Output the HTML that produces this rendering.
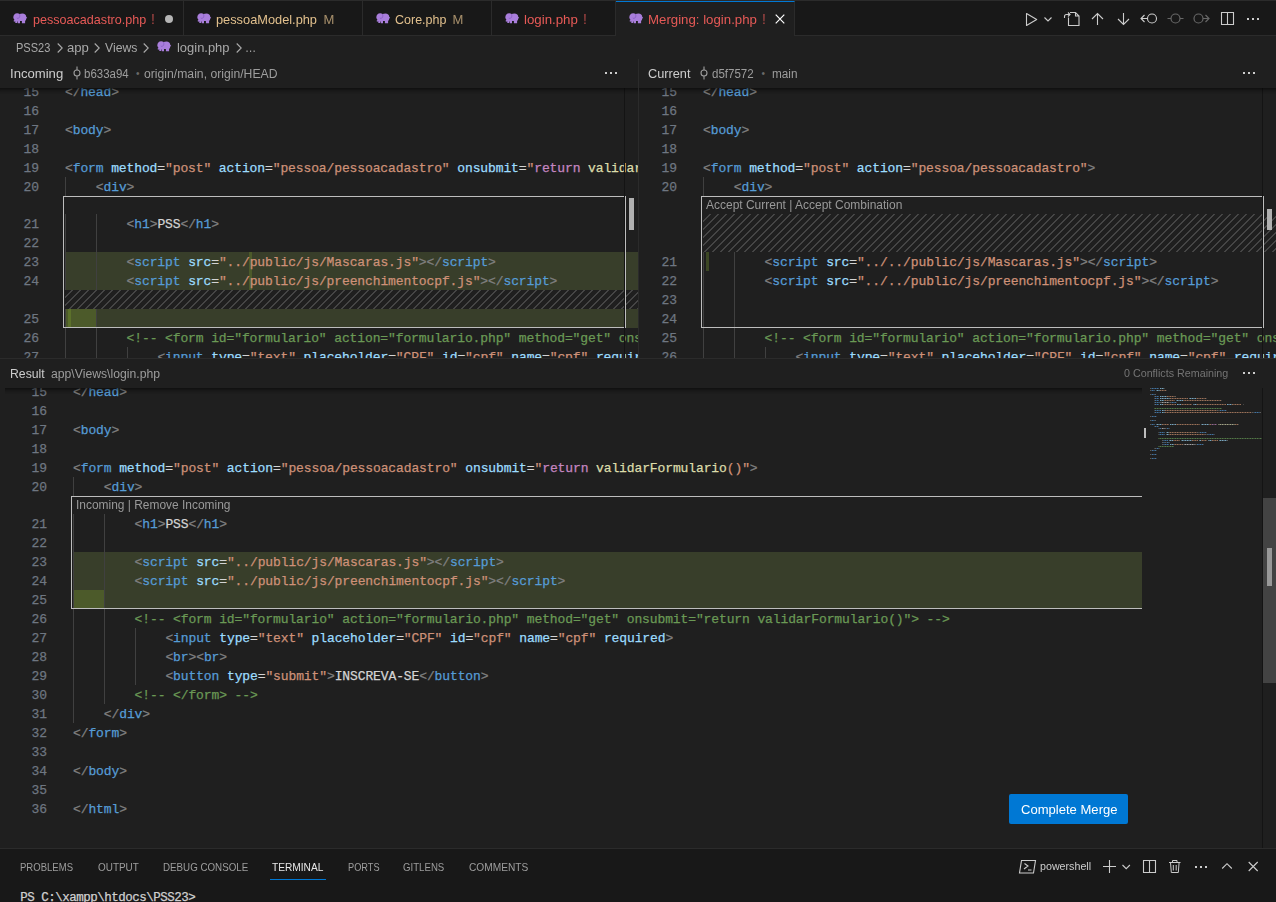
<!DOCTYPE html>
<html lang="pt-BR"><head><meta charset="utf-8"><title>Merging: login.php - PSS23 - Visual Studio Code</title>
<style>
*{box-sizing:border-box;margin:0;padding:0}
html,body{width:1276px;height:902px;overflow:hidden;background:#1f1f1f}
body{position:relative;font-family:"Liberation Sans",sans-serif;font-size:13px;color:#ccc}
.abs{position:absolute}
.ui{position:absolute;white-space:pre;line-height:20px;height:20px;transform-origin:0 0}
.pane{position:absolute;overflow:hidden;background:#1f1f1f}
.ln{position:absolute;left:0;text-align:right;color:#6e7681;font-family:"Liberation Mono",monospace;font-size:13px;letter-spacing:-0.112px;line-height:19px;height:19px;white-space:pre;-webkit-text-stroke:0.25px}
.cl{position:absolute;font-family:"Liberation Mono",monospace;font-size:13px;letter-spacing:-0.112px;line-height:19px;height:19px;white-space:pre;color:#ccc;-webkit-text-stroke:0.25px}
.p{color:#808080}.t{color:#569cd6}.a{color:#9cdcfe}.s{color:#ce9178}.x{color:#d4d4d4}.c{color:#6a9955}.k{color:#c586c0}.f{color:#dcdcaa}
.guide{position:absolute;width:1px;background:#404040}
.box{position:absolute;border:1px solid #bdbdbd}
.chg{position:absolute;background:#383e2a}
.wchg{position:absolute;background:#4c5a2a}
.wbar{position:absolute;width:3px;background:#4c5a2a}
.hatch{position:absolute;background-image:linear-gradient(-45deg,#454545 12.5%,transparent 12.5%,transparent 50%,#454545 50%,#454545 62.5%,transparent 62.5%,transparent 100%);background-size:8px 8px}
.shadow{position:absolute;height:6px;box-shadow:#000 0 6px 6px -6px inset}
svg.ic{position:absolute;overflow:visible}
.mm{position:absolute;left:1150px;top:0;width:112px;height:80px;-webkit-mask-image:repeating-linear-gradient(90deg,#000 0,#000 1.3px,rgba(0,0,0,.45) 1.3px,rgba(0,0,0,.45) 2px,#000 2px,#000 3.4px,rgba(0,0,0,.6) 3.4px,rgba(0,0,0,.6) 5px);mask-image:repeating-linear-gradient(90deg,#000 0,#000 1.3px,rgba(0,0,0,.45) 1.3px,rgba(0,0,0,.45) 2px,#000 2px,#000 3.4px,rgba(0,0,0,.6) 3.4px,rgba(0,0,0,.6) 5px)}
.mm i{position:absolute;height:1px}
</style></head><body>

<div class="abs" style="left:0;top:0;width:1276px;height:36px;background:#181818;border-top:1px solid #2b2b2b;border-bottom:1px solid #2b2b2b"></div>
<div class="abs" style="left:183px;top:1px;width:1px;height:35px;background:#2b2b2b"></div>
<div class="abs" style="left:362px;top:1px;width:1px;height:35px;background:#2b2b2b"></div>
<div class="abs" style="left:491px;top:1px;width:1px;height:35px;background:#2b2b2b"></div>
<div class="abs" style="left:615px;top:1px;width:1px;height:35px;background:#2b2b2b"></div>
<div class="abs" style="left:616px;top:1px;width:179px;height:35px;background:#1f1f1f;border-top:1px solid #0078d4;border-right:1px solid #2b2b2b"></div>
<svg class="ic" style="left:13px;top:12.6px" width="14.500" height="10.500" viewBox="0 0 14.500 10.500"><path fill="#a97edb" d="M0.300 4.500C0.300 2 1.800 0.200 4.200 0.200c1 0 1.800 0.300 2.400 0.800C7.400 0.600 8.400 0.400 9.400 0.400c2.400 0 3.800 1.500 3.900 3.500l0.900 0.900-0.900 0.600c-0.100 1.100-0.600 1.900-1.200 2.500V10.300H8.900V8H7V10.300H4.800V8.600H4.200V10H2.300V8.200C1.800 8.600 1.200 8.800 0.800 8.600L0.600 7.600C1.100 7.600 1.400 7.200 1.300 6.600 0.700 6 0.300 5.300 0.300 4.500z"/><path fill="none" stroke="#7f55bd" stroke-width="0.700" d="M6.500 1.100c0.700 1.400 0.300 3.300-0.900 4.100-0.600 0.300-1.300 0.200-1.800-0.200"/></svg>
<span class="ui" id="tab1" style="left:32.60px;top:9.6px;font-size:13px;color:#e75a57;transform:scaleX(0.9676);">pessoacadastro.php</span>
<span class="ui" id="tab1b" style="left:151.00px;top:9.1px;font-size:14px;color:#e75a57;transform:scaleX(1.0000);opacity:.7">!</span>
<div class="abs" style="left:164.500px;top:14.500px;width:8.500px;height:8.500px;border-radius:50%;background:#b5b5b5"></div>
<svg class="ic" style="left:196.8px;top:12.6px" width="14.500" height="10.500" viewBox="0 0 14.500 10.500"><path fill="#a97edb" d="M0.300 4.500C0.300 2 1.800 0.200 4.200 0.200c1 0 1.800 0.300 2.400 0.800C7.400 0.600 8.400 0.400 9.400 0.400c2.400 0 3.800 1.500 3.900 3.500l0.900 0.900-0.900 0.600c-0.100 1.100-0.600 1.900-1.200 2.500V10.300H8.900V8H7V10.300H4.800V8.600H4.200V10H2.300V8.200C1.800 8.600 1.200 8.800 0.800 8.600L0.600 7.600C1.100 7.600 1.400 7.200 1.300 6.600 0.700 6 0.300 5.300 0.300 4.500z"/><path fill="none" stroke="#7f55bd" stroke-width="0.700" d="M6.500 1.100c0.700 1.400 0.300 3.300-0.900 4.100-0.600 0.300-1.300 0.200-1.800-0.200"/></svg>
<span class="ui" id="tab2" style="left:216.40px;top:9.6px;font-size:13px;color:#e2c08d;transform:scaleX(0.9840);">pessoaModel.php</span>
<span class="ui" id="tab2b" style="left:323.40px;top:9.6px;font-size:13px;color:#e2c08d;transform:scaleX(1.0000);opacity:.7">M</span>
<svg class="ic" style="left:375.8px;top:12.6px" width="14.500" height="10.500" viewBox="0 0 14.500 10.500"><path fill="#a97edb" d="M0.300 4.500C0.300 2 1.800 0.200 4.200 0.200c1 0 1.800 0.300 2.400 0.800C7.400 0.600 8.400 0.400 9.400 0.400c2.400 0 3.800 1.500 3.900 3.500l0.900 0.900-0.900 0.600c-0.100 1.100-0.600 1.900-1.200 2.500V10.300H8.900V8H7V10.300H4.800V8.600H4.200V10H2.300V8.200C1.800 8.600 1.200 8.800 0.800 8.600L0.600 7.600C1.100 7.600 1.400 7.200 1.300 6.600 0.700 6 0.300 5.300 0.300 4.500z"/><path fill="none" stroke="#7f55bd" stroke-width="0.700" d="M6.500 1.100c0.700 1.400 0.300 3.300-0.900 4.100-0.600 0.300-1.300 0.200-1.800-0.200"/></svg>
<span class="ui" id="tab3" style="left:394.80px;top:9.6px;font-size:13px;color:#e2c08d;transform:scaleX(0.9610);">Core.php</span>
<span class="ui" id="tab3b" style="left:452.50px;top:9.6px;font-size:13px;color:#e2c08d;transform:scaleX(1.0000);opacity:.7">M</span>
<svg class="ic" style="left:504.8px;top:12.6px" width="14.500" height="10.500" viewBox="0 0 14.500 10.500"><path fill="#a97edb" d="M0.300 4.500C0.300 2 1.800 0.200 4.200 0.200c1 0 1.800 0.300 2.400 0.800C7.400 0.600 8.400 0.400 9.400 0.400c2.400 0 3.800 1.500 3.900 3.500l0.900 0.900-0.900 0.600c-0.100 1.100-0.600 1.900-1.200 2.500V10.300H8.900V8H7V10.300H4.800V8.600H4.200V10H2.300V8.200C1.800 8.600 1.200 8.800 0.800 8.600L0.600 7.600C1.100 7.600 1.400 7.200 1.300 6.600 0.700 6 0.300 5.300 0.300 4.500z"/><path fill="none" stroke="#7f55bd" stroke-width="0.700" d="M6.500 1.100c0.700 1.400 0.300 3.300-0.900 4.100-0.600 0.300-1.300 0.200-1.800-0.200"/></svg>
<span class="ui" id="tab4" style="left:524.10px;top:9.6px;font-size:13px;color:#e75a57;transform:scaleX(1.0212);">login.php</span>
<span class="ui" id="tab4b" style="left:583.00px;top:9.1px;font-size:14px;color:#e75a57;transform:scaleX(1.0000);opacity:.7">!</span>
<svg class="ic" style="left:628.8px;top:12.6px" width="14.500" height="10.500" viewBox="0 0 14.500 10.500"><path fill="#a97edb" d="M0.300 4.500C0.300 2 1.800 0.200 4.200 0.200c1 0 1.800 0.300 2.400 0.800C7.400 0.600 8.400 0.400 9.400 0.400c2.400 0 3.800 1.500 3.900 3.500l0.900 0.900-0.900 0.600c-0.100 1.100-0.600 1.900-1.200 2.500V10.300H8.900V8H7V10.300H4.800V8.600H4.200V10H2.300V8.200C1.800 8.600 1.200 8.800 0.800 8.600L0.600 7.600C1.100 7.600 1.400 7.200 1.300 6.600 0.700 6 0.300 5.300 0.300 4.500z"/><path fill="none" stroke="#7f55bd" stroke-width="0.700" d="M6.500 1.100c0.700 1.400 0.300 3.300-0.900 4.100-0.600 0.300-1.300 0.200-1.800-0.200"/></svg>
<span class="ui" id="tab5" style="left:648.30px;top:9.6px;font-size:13px;color:#e75a57;transform:scaleX(1.0181);">Merging: login.php</span>
<span class="ui" id="tab5b" style="left:762.00px;top:9.1px;font-size:14px;color:#e75a57;transform:scaleX(1.0000);opacity:.7">!</span>
<svg class="ic" style="left:775px;top:14px" width="10" height="10" viewBox="0 0 10 10"><path d="M0.700 0.700l8.600 8.600M9.300 0.700l-8.600 8.600" stroke="#fff" stroke-width="1.200" fill="none"/></svg>
<svg class="ic" style="left:1020px;top:8px" width="250" height="24" viewBox="1020 8 250 24" fill="none" stroke="#ccc" stroke-width="1.1">
<path d="M1026.500 13.500v12l10.200-6z" stroke-linejoin="round"/>
<path d="M1044.500 17.500l3.500 3.500 3.500-3.500"/>
<path d="M1068.500 17.500v8h10.500v-9.500l-3.500-3.500h-5.500M1075.500 12.500v3.500h3.500"/>
<path d="M1064.500 18v-1.500a2 2 0 0 1 2-2h3.500M1068 12.500l2 2-2 2"/>
<path d="M1097.500 25v-11.500M1092 19l5.500-5.500 5.500 5.500"/>
<path d="M1123.500 13v11.500M1118 19l5.500 5.500 5.500-5.500"/>
<circle cx="1152" cy="18.500" r="4.500"/><path d="M1147.500 18.500h-6.500M1144.500 15l-3.500 3.500 3.500 3.500"/>
<g stroke="#676767" stroke-width="1.2"><circle cx="1175.500" cy="18.500" r="4.500"/><path d="M1167.500 18.500h3.500M1180 18.500h3.500"/>
<circle cx="1198.500" cy="18.500" r="4.500"/><path d="M1203 18.500h6M1205.500 15l3.500 3.500-3.500 3.500"/></g>
<path d="M1221.500 12.500h12v12h-12zM1227.500 12.500v12"/>
<g fill="#ccc" stroke="none"><rect x="1247" y="18" width="2" height="2"/><rect x="1252" y="18" width="2" height="2"/><rect x="1257" y="18" width="2" height="2"/></g>
</svg>
<span class="ui" id="bc1" style="left:16.00px;top:37.7px;font-size:13px;color:#a9a9a9;transform:scaleX(0.8472);">PSS23</span><svg class="ic" style="left:57.2px;top:42.500px" width="6" height="10" viewBox="0 0 6 10"><path d="M0.700 0.500l4.500 4.500-4.500 4.500" stroke="#a9a9a9" stroke-width="1.100" fill="none"/></svg><span class="ui" id="bc2" style="left:67.00px;top:37.7px;font-size:13px;color:#a9a9a9;transform:scaleX(1.0091);">app</span><svg class="ic" style="left:94.2px;top:42.500px" width="6" height="10" viewBox="0 0 6 10"><path d="M0.700 0.500l4.500 4.500-4.500 4.500" stroke="#a9a9a9" stroke-width="1.100" fill="none"/></svg><span class="ui" id="bc3" style="left:105.10px;top:37.7px;font-size:13px;color:#a9a9a9;transform:scaleX(0.9404);">Views</span><svg class="ic" style="left:143.2px;top:42.500px" width="6" height="10" viewBox="0 0 6 10"><path d="M0.700 0.500l4.500 4.500-4.500 4.500" stroke="#a9a9a9" stroke-width="1.100" fill="none"/></svg><svg class="ic" style="left:157px;top:41.2px" width="14.500" height="10.500" viewBox="0 0 14.500 10.500"><path fill="#a97edb" d="M0.300 4.500C0.300 2 1.800 0.200 4.200 0.200c1 0 1.800 0.300 2.400 0.800C7.400 0.600 8.400 0.400 9.400 0.400c2.400 0 3.800 1.500 3.900 3.500l0.900 0.900-0.900 0.600c-0.100 1.100-0.600 1.900-1.200 2.500V10.300H8.900V8H7V10.300H4.800V8.600H4.200V10H2.300V8.200C1.800 8.600 1.200 8.800 0.800 8.600L0.600 7.600C1.100 7.600 1.400 7.200 1.300 6.600 0.700 6 0.300 5.300 0.300 4.500z"/><path fill="none" stroke="#7f55bd" stroke-width="0.700" d="M6.500 1.100c0.700 1.400 0.300 3.300-0.900 4.100-0.600 0.300-1.300 0.200-1.800-0.200"/></svg><span class="ui" id="bc4" style="left:176.80px;top:37.7px;font-size:13px;color:#a9a9a9;transform:scaleX(0.9947);">login.php</span><svg class="ic" style="left:236.2px;top:42.500px" width="6" height="10" viewBox="0 0 6 10"><path d="M0.700 0.500l4.500 4.500-4.500 4.500" stroke="#a9a9a9" stroke-width="1.100" fill="none"/></svg><span class="ui" style="left:245.100px;top:37.7px;font-size:13px;color:#a9a9a9;transform:scaleX(.86)">…</span>
<span class="ui" id="h1a" style="left:10.30px;top:63.9px;font-size:13px;color:#ccc;transform:scaleX(1.0085);">Incoming</span><svg class="ic" style="left:73px;top:66px" width="8" height="14" viewBox="0 0 8 14"><circle cx="4" cy="7" r="3" stroke="#9d9d9d" stroke-width="1.100" fill="none"/><path d="M4 0.500v3.500M4 10v3.500" stroke="#9d9d9d" stroke-width="1.100"/></svg><span class="ui" id="h1b" style="left:84.20px;top:63.9px;font-size:12px;color:#9d9d9d;transform:scaleX(0.9568);">b633a94</span><span class="ui" id="h1c" style="left:136.00px;top:63.9px;font-size:10px;color:#6a6a6a;transform:scaleX(1.0000);">•</span><span class="ui" id="h1d" style="left:143.90px;top:63.9px;font-size:12px;color:#9d9d9d;transform:scaleX(1.0161);">origin/main, origin/HEAD</span><svg class="ic" style="left:605px;top:72px" width="13" height="2" viewBox="0 0 13 2"><rect x="0" y="0" width="2" height="2" fill="#ccc"/><rect x="5" y="0" width="2" height="2" fill="#ccc"/><rect x="10" y="0" width="2" height="2" fill="#ccc"/></svg>
<span class="ui" id="h2a" style="left:648.00px;top:63.9px;font-size:13px;color:#ccc;transform:scaleX(0.9802);">Current</span><svg class="ic" style="left:700px;top:66px" width="8" height="14" viewBox="0 0 8 14"><circle cx="4" cy="7" r="3" stroke="#9d9d9d" stroke-width="1.100" fill="none"/><path d="M4 0.500v3.500M4 10v3.500" stroke="#9d9d9d" stroke-width="1.100"/></svg><span class="ui" id="h2b" style="left:711.70px;top:63.9px;font-size:12px;color:#9d9d9d;transform:scaleX(0.9610);">d5f7572</span><span class="ui" id="h2c" style="left:761.50px;top:63.9px;font-size:10px;color:#6a6a6a;transform:scaleX(1.0000);">•</span><span class="ui" id="h2d" style="left:771.50px;top:63.9px;font-size:12px;color:#9d9d9d;transform:scaleX(0.9802);">main</span><svg class="ic" style="left:1243px;top:72px" width="13" height="2" viewBox="0 0 13 2"><rect x="0" y="0" width="2" height="2" fill="#ccc"/><rect x="5" y="0" width="2" height="2" fill="#ccc"/><rect x="10" y="0" width="2" height="2" fill="#ccc"/></svg>
<span class="ui" id="h3a" style="left:10.30px;top:363.9px;font-size:13px;color:#ccc;transform:scaleX(0.9414);">Result</span><span class="ui" id="h3b" style="left:51.00px;top:363.9px;font-size:12px;color:#9d9d9d;transform:scaleX(1.0168);">app\Views\login.php</span><span class="ui" id="h3c" style="left:1123.80px;top:363.0px;font-size:11px;color:#747474;transform:scaleX(0.9748);">0 Conflicts Remaining</span><svg class="ic" style="left:1243px;top:372px" width="13" height="2" viewBox="0 0 13 2"><rect x="0" y="0" width="2" height="2" fill="#ccc"/><rect x="5" y="0" width="2" height="2" fill="#ccc"/><rect x="10" y="0" width="2" height="2" fill="#ccc"/></svg>
<div class="abs" style="left:638px;top:59px;width:1px;height:299px;background:#2b2b2b"></div>
<div class="abs" style="left:0;top:358px;width:1276px;height:1px;background:#2b2b2b"></div>
<div class="pane" style="left:0;top:88px;width:638px;height:270px">
<div class="chg" style="left:65px;top:164px;width:573px;height:38px"></div>
<div class="wbar" style="left:249px;top:164px;height:38px"></div>
<div class="hatch" style="left:65px;top:202px;width:573px;height:19px"></div>
<div class="chg" style="left:65px;top:221px;width:573px;height:19px"></div>
<div class="wchg" style="left:65px;top:221px;width:31px;height:19px"></div>
<div class="wbar" style="left:68px;top:221px;height:19px;background:#5c712a"></div>
<div class="guide" style="left:65px;top:89px;height:19px"></div>
<div class="guide" style="left:65px;top:126px;height:76px"></div>
<div class="guide" style="left:96px;top:126px;height:76px"></div>
<div class="guide" style="left:65px;top:221px;height:57px"></div>
<div class="guide" style="left:96px;top:221px;height:57px"></div>
<div class="guide" style="left:127px;top:259px;height:19px"></div>
<div class="ln" style="top:-5px;width:39px">15</div>
<div class="cl" style="top:-5px;left:65.0px"><span class="p">&lt;/</span><span class="t">head</span><span class="p">&gt;</span></div>
<div class="ln" style="top:14px;width:39px">16</div>
<div class="ln" style="top:33px;width:39px">17</div>
<div class="cl" style="top:33px;left:65.0px"><span class="p">&lt;</span><span class="t">body</span><span class="p">&gt;</span></div>
<div class="ln" style="top:52px;width:39px">18</div>
<div class="ln" style="top:71px;width:39px">19</div>
<div class="cl" style="top:71px;left:65.0px"><span class="p">&lt;</span><span class="t">form</span> <span class="a">method</span><span class="x">=</span><span class="s">"post"</span> <span class="a">action</span><span class="x">=</span><span class="s">"pessoa/pessoacadastro"</span> <span class="a">onsubmit</span><span class="x">=</span><span class="s">"</span><span class="k">return</span> <span class="f">validarFormulario</span><span class="s">()"</span><span class="p">&gt;</span></div>
<div class="ln" style="top:90px;width:39px">20</div>
<div class="cl" style="top:90px;left:95.8px"><span class="p">&lt;</span><span class="t">div</span><span class="p">&gt;</span></div>
<div class="ln" style="top:127px;width:39px">21</div>
<div class="cl" style="top:127px;left:126.6px"><span class="p">&lt;</span><span class="t">h1</span><span class="p">&gt;</span><span class="x">PSS</span><span class="p">&lt;/</span><span class="t">h1</span><span class="p">&gt;</span></div>
<div class="ln" style="top:146px;width:39px">22</div>
<div class="ln" style="top:165px;width:39px">23</div>
<div class="cl" style="top:165px;left:126.6px"><span class="p">&lt;</span><span class="t">script</span> <span class="a">src</span><span class="x">=</span><span class="s">"../public/js/Mascaras.js"</span><span class="p">&gt;</span><span class="p">&lt;/</span><span class="t">script</span><span class="p">&gt;</span></div>
<div class="ln" style="top:184px;width:39px">24</div>
<div class="cl" style="top:184px;left:126.6px"><span class="p">&lt;</span><span class="t">script</span> <span class="a">src</span><span class="x">=</span><span class="s">"../public/js/preenchimentocpf.js"</span><span class="p">&gt;</span><span class="p">&lt;/</span><span class="t">script</span><span class="p">&gt;</span></div>
<div class="ln" style="top:222px;width:39px">25</div>
<div class="ln" style="top:241px;width:39px">26</div>
<div class="cl" style="top:241px;left:126.6px"><span class="c">&lt;!-- &lt;form id="formulario" action="formulario.php" method="get" onsubmit="return validarFormulario()"&gt; --&gt;</span></div>
<div class="ln" style="top:260px;width:39px">27</div>
<div class="cl" style="top:260px;left:157.4px"><span class="p">&lt;</span><span class="t">input</span> <span class="a">type</span><span class="x">=</span><span class="s">"text"</span> <span class="a">placeholder</span><span class="x">=</span><span class="s">"CPF"</span> <span class="a">id</span><span class="x">=</span><span class="s">"cpf"</span> <span class="a">name</span><span class="x">=</span><span class="s">"cpf"</span> <span class="a">required</span><span class="p">&gt;</span></div>
<div class="box" style="left:63px;top:108px;width:563px;height:132px"></div>
<div class="abs" style="left:624px;top:0;width:1px;height:270px;background:#141414"></div>
<div class="abs" style="left:629px;top:110px;width:5px;height:32px;background:#b0b0b0"></div>
<div class="shadow" style="top:0;left:0;width:638px"></div>
</div>
<div class="pane" style="left:639px;top:88px;width:637px;height:270px">
<div class="hatch" style="left:64px;top:126px;width:573px;height:38px"></div>
<div class="wbar" style="left:67px;top:164px;height:19px;background:#3c4724"></div>
<div class="guide" style="left:64px;top:89px;height:19px"></div>
<div class="guide" style="left:64px;top:164px;height:114px"></div>
<div class="guide" style="left:95px;top:164px;height:114px"></div>
<div class="guide" style="left:126px;top:259px;height:19px"></div>
<div class="ln" style="top:-5px;width:38px">15</div>
<div class="cl" style="top:-5px;left:64.0px"><span class="p">&lt;/</span><span class="t">head</span><span class="p">&gt;</span></div>
<div class="ln" style="top:14px;width:38px">16</div>
<div class="ln" style="top:33px;width:38px">17</div>
<div class="cl" style="top:33px;left:64.0px"><span class="p">&lt;</span><span class="t">body</span><span class="p">&gt;</span></div>
<div class="ln" style="top:52px;width:38px">18</div>
<div class="ln" style="top:71px;width:38px">19</div>
<div class="cl" style="top:71px;left:64.0px"><span class="p">&lt;</span><span class="t">form</span> <span class="a">method</span><span class="x">=</span><span class="s">"post"</span> <span class="a">action</span><span class="x">=</span><span class="s">"pessoa/pessoacadastro"</span><span class="p">&gt;</span></div>
<div class="ln" style="top:90px;width:38px">20</div>
<div class="cl" style="top:90px;left:94.8px"><span class="p">&lt;</span><span class="t">div</span><span class="p">&gt;</span></div>
<div class="ln" style="top:165px;width:38px">21</div>
<div class="cl" style="top:165px;left:125.6px"><span class="p">&lt;</span><span class="t">script</span> <span class="a">src</span><span class="x">=</span><span class="s">"../../public/js/Mascaras.js"</span><span class="p">&gt;</span><span class="p">&lt;/</span><span class="t">script</span><span class="p">&gt;</span></div>
<div class="ln" style="top:184px;width:38px">22</div>
<div class="cl" style="top:184px;left:125.6px"><span class="p">&lt;</span><span class="t">script</span> <span class="a">src</span><span class="x">=</span><span class="s">"../../public/js/preenchimentocpf.js"</span><span class="p">&gt;</span><span class="p">&lt;/</span><span class="t">script</span><span class="p">&gt;</span></div>
<div class="ln" style="top:203px;width:38px">23</div>
<div class="ln" style="top:222px;width:38px">24</div>
<div class="ln" style="top:241px;width:38px">25</div>
<div class="cl" style="top:241px;left:125.6px"><span class="c">&lt;!-- &lt;form id="formulario" action="formulario.php" method="get" onsubmit="return validarFormulario()"&gt; --&gt;</span></div>
<div class="ln" style="top:260px;width:38px">26</div>
<div class="cl" style="top:260px;left:156.4px"><span class="p">&lt;</span><span class="t">input</span> <span class="a">type</span><span class="x">=</span><span class="s">"text"</span> <span class="a">placeholder</span><span class="x">=</span><span class="s">"CPF"</span> <span class="a">id</span><span class="x">=</span><span class="s">"cpf"</span> <span class="a">name</span><span class="x">=</span><span class="s">"cpf"</span> <span class="a">required</span><span class="p">&gt;</span></div>
<div class="box" style="left:62px;top:108px;width:563px;height:132px"></div>
<div class="abs" style="left:623px;top:0;width:1px;height:270px;background:#141414"></div>
<div class="abs" style="left:628px;top:121px;width:5px;height:21px;background:#b0b0b0"></div>
<div class="shadow" style="top:0;left:0;width:637px"></div>
</div>
<span class="ui" id="lens2" style="left:706.00px;top:195.2px;font-size:12px;color:#999;transform:scaleX(0.9987);">Accept Current | Accept Combination</span>
<div class="pane" style="left:0;top:388px;width:1276px;height:460px">
<div class="chg" style="left:73px;top:164px;width:1069px;height:57px"></div>
<div class="wchg" style="left:73px;top:202px;width:31px;height:19px"></div>
<div class="guide" style="left:73px;top:89px;height:19px"></div>
<div class="guide" style="left:73px;top:126px;height:209px"></div>
<div class="guide" style="left:104px;top:126px;height:190px"></div>
<div class="guide" style="left:135px;top:240px;height:57px"></div>
<div class="ln" style="top:-5px;width:47px">15</div>
<div class="cl" style="top:-5px;left:73.0px"><span class="p">&lt;/</span><span class="t">head</span><span class="p">&gt;</span></div>
<div class="ln" style="top:14px;width:47px">16</div>
<div class="ln" style="top:33px;width:47px">17</div>
<div class="cl" style="top:33px;left:73.0px"><span class="p">&lt;</span><span class="t">body</span><span class="p">&gt;</span></div>
<div class="ln" style="top:52px;width:47px">18</div>
<div class="ln" style="top:71px;width:47px">19</div>
<div class="cl" style="top:71px;left:73.0px"><span class="p">&lt;</span><span class="t">form</span> <span class="a">method</span><span class="x">=</span><span class="s">"post"</span> <span class="a">action</span><span class="x">=</span><span class="s">"pessoa/pessoacadastro"</span> <span class="a">onsubmit</span><span class="x">=</span><span class="s">"</span><span class="k">return</span> <span class="f">validarFormulario</span><span class="s">()"</span><span class="p">&gt;</span></div>
<div class="ln" style="top:90px;width:47px">20</div>
<div class="cl" style="top:90px;left:103.8px"><span class="p">&lt;</span><span class="t">div</span><span class="p">&gt;</span></div>
<div class="ln" style="top:127px;width:47px">21</div>
<div class="cl" style="top:127px;left:134.6px"><span class="p">&lt;</span><span class="t">h1</span><span class="p">&gt;</span><span class="x">PSS</span><span class="p">&lt;/</span><span class="t">h1</span><span class="p">&gt;</span></div>
<div class="ln" style="top:146px;width:47px">22</div>
<div class="ln" style="top:165px;width:47px">23</div>
<div class="cl" style="top:165px;left:134.6px"><span class="p">&lt;</span><span class="t">script</span> <span class="a">src</span><span class="x">=</span><span class="s">"../public/js/Mascaras.js"</span><span class="p">&gt;</span><span class="p">&lt;/</span><span class="t">script</span><span class="p">&gt;</span></div>
<div class="ln" style="top:184px;width:47px">24</div>
<div class="cl" style="top:184px;left:134.6px"><span class="p">&lt;</span><span class="t">script</span> <span class="a">src</span><span class="x">=</span><span class="s">"../public/js/preenchimentocpf.js"</span><span class="p">&gt;</span><span class="p">&lt;/</span><span class="t">script</span><span class="p">&gt;</span></div>
<div class="ln" style="top:203px;width:47px">25</div>
<div class="ln" style="top:222px;width:47px">26</div>
<div class="cl" style="top:222px;left:134.6px"><span class="c">&lt;!-- &lt;form id="formulario" action="formulario.php" method="get" onsubmit="return validarFormulario()"&gt; --&gt;</span></div>
<div class="ln" style="top:241px;width:47px">27</div>
<div class="cl" style="top:241px;left:165.4px"><span class="p">&lt;</span><span class="t">input</span> <span class="a">type</span><span class="x">=</span><span class="s">"text"</span> <span class="a">placeholder</span><span class="x">=</span><span class="s">"CPF"</span> <span class="a">id</span><span class="x">=</span><span class="s">"cpf"</span> <span class="a">name</span><span class="x">=</span><span class="s">"cpf"</span> <span class="a">required</span><span class="p">&gt;</span></div>
<div class="ln" style="top:260px;width:47px">28</div>
<div class="cl" style="top:260px;left:165.4px"><span class="p">&lt;</span><span class="t">br</span><span class="p">&gt;</span><span class="p">&lt;</span><span class="t">br</span><span class="p">&gt;</span></div>
<div class="ln" style="top:279px;width:47px">29</div>
<div class="cl" style="top:279px;left:165.4px"><span class="p">&lt;</span><span class="t">button</span> <span class="a">type</span><span class="x">=</span><span class="s">"submit"</span><span class="p">&gt;</span><span class="x">INSCREVA-SE</span><span class="p">&lt;/</span><span class="t">button</span><span class="p">&gt;</span></div>
<div class="ln" style="top:298px;width:47px">30</div>
<div class="cl" style="top:298px;left:134.6px"><span class="c">&lt;!-- &lt;/form&gt; --&gt;</span></div>
<div class="ln" style="top:317px;width:47px">31</div>
<div class="cl" style="top:317px;left:103.8px"><span class="p">&lt;/</span><span class="t">div</span><span class="p">&gt;</span></div>
<div class="ln" style="top:336px;width:47px">32</div>
<div class="cl" style="top:336px;left:73.0px"><span class="p">&lt;/</span><span class="t">form</span><span class="p">&gt;</span></div>
<div class="ln" style="top:355px;width:47px">33</div>
<div class="ln" style="top:374px;width:47px">34</div>
<div class="cl" style="top:374px;left:73.0px"><span class="p">&lt;/</span><span class="t">body</span><span class="p">&gt;</span></div>
<div class="ln" style="top:393px;width:47px">35</div>
<div class="ln" style="top:412px;width:47px">36</div>
<div class="cl" style="top:412px;left:73.0px"><span class="p">&lt;/</span><span class="t">html</span><span class="p">&gt;</span></div>
<div class="box" style="left:71px;top:108px;width:1073px;height:113px"></div>
<div class="abs" style="left:1142px;top:0;width:120px;height:460px;background:#1f1f1f"></div>
<div class="mm"><i style="left:0px;top:0px;width:1px;background:#5c5c5c"></i><i style="left:1px;top:0px;width:8px;background:#4273a0"></i><i style="left:10px;top:0px;width:4px;background:#78a4bc"></i><i style="left:14px;top:0px;width:1px;background:#5c5c5c"></i><i style="left:0px;top:2px;width:1px;background:#5c5c5c"></i><i style="left:1px;top:2px;width:4px;background:#4273a0"></i><i style="left:6px;top:2px;width:4px;background:#78a4bc"></i><i style="left:10px;top:2px;width:6px;background:#986f57"></i><i style="left:16px;top:2px;width:1px;background:#5c5c5c"></i><i style="left:0px;top:6px;width:1px;background:#5c5c5c"></i><i style="left:1px;top:6px;width:4px;background:#4273a0"></i><i style="left:5px;top:6px;width:1px;background:#5c5c5c"></i><i style="left:4px;top:8px;width:1px;background:#5c5c5c"></i><i style="left:5px;top:8px;width:4px;background:#4273a0"></i><i style="left:10px;top:8px;width:7px;background:#78a4bc"></i><i style="left:17px;top:8px;width:8px;background:#986f57"></i><i style="left:25px;top:8px;width:1px;background:#5c5c5c"></i><i style="left:4px;top:10px;width:1px;background:#5c5c5c"></i><i style="left:5px;top:10px;width:4px;background:#4273a0"></i><i style="left:10px;top:10px;width:10px;background:#78a4bc"></i><i style="left:20px;top:10px;width:18px;background:#986f57"></i><i style="left:39px;top:10px;width:7px;background:#78a4bc"></i><i style="left:46px;top:10px;width:10px;background:#986f57"></i><i style="left:56px;top:10px;width:1px;background:#5c5c5c"></i><i style="left:4px;top:12px;width:1px;background:#5c5c5c"></i><i style="left:5px;top:12px;width:4px;background:#4273a0"></i><i style="left:10px;top:12px;width:4px;background:#78a4bc"></i><i style="left:14px;top:12px;width:11px;background:#986f57"></i><i style="left:26px;top:12px;width:7px;background:#78a4bc"></i><i style="left:33px;top:12px;width:38px;background:#986f57"></i><i style="left:71px;top:12px;width:1px;background:#5c5c5c"></i><i style="left:4px;top:14px;width:1px;background:#5c5c5c"></i><i style="left:5px;top:14px;width:5px;background:#4273a0"></i><i style="left:10px;top:14px;width:1px;background:#5c5c5c"></i><i style="left:11px;top:14px;width:8px;background:#a0a0a0"></i><i style="left:19px;top:14px;width:2px;background:#5c5c5c"></i><i style="left:21px;top:14px;width:5px;background:#4273a0"></i><i style="left:26px;top:14px;width:1px;background:#5c5c5c"></i><i style="left:4px;top:16px;width:1px;background:#5c5c5c"></i><i style="left:5px;top:16px;width:4px;background:#4273a0"></i><i style="left:10px;top:16px;width:3px;background:#78a4bc"></i><i style="left:13px;top:16px;width:13px;background:#986f57"></i><i style="left:27px;top:16px;width:4px;background:#78a4bc"></i><i style="left:31px;top:16px;width:11px;background:#986f57"></i><i style="left:43px;top:16px;width:4px;background:#78a4bc"></i><i style="left:47px;top:16px;width:29px;background:#986f57"></i><i style="left:77px;top:16px;width:5px;background:#78a4bc"></i><i style="left:82px;top:16px;width:9px;background:#986f57"></i><i style="left:93px;top:16px;width:1px;background:#5c5c5c"></i><i style="left:4px;top:20px;width:68px;background:#527746"></i><i style="left:4px;top:22px;width:1px;background:#5c5c5c"></i><i style="left:5px;top:22px;width:6px;background:#4273a0"></i><i style="left:12px;top:22px;width:3px;background:#78a4bc"></i><i style="left:15px;top:22px;width:52px;background:#986f57"></i><i style="left:67px;top:22px;width:3px;background:#5c5c5c"></i><i style="left:70px;top:22px;width:6px;background:#4273a0"></i><i style="left:76px;top:22px;width:1px;background:#5c5c5c"></i><i style="left:4px;top:24px;width:1px;background:#5c5c5c"></i><i style="left:5px;top:24px;width:6px;background:#4273a0"></i><i style="left:12px;top:24px;width:3px;background:#78a4bc"></i><i style="left:15px;top:24px;width:86px;background:#986f57"></i><i style="left:101px;top:24px;width:3px;background:#5c5c5c"></i><i style="left:104px;top:24px;width:6px;background:#4273a0"></i><i style="left:110px;top:24px;width:1px;background:#5c5c5c"></i><i style="left:0px;top:28px;width:2px;background:#5c5c5c"></i><i style="left:2px;top:28px;width:4px;background:#4273a0"></i><i style="left:6px;top:28px;width:1px;background:#5c5c5c"></i><i style="left:0px;top:32px;width:1px;background:#5c5c5c"></i><i style="left:1px;top:32px;width:4px;background:#4273a0"></i><i style="left:5px;top:32px;width:1px;background:#5c5c5c"></i><i style="left:0px;top:36px;width:1px;background:#5c5c5c"></i><i style="left:1px;top:36px;width:4px;background:#4273a0"></i><i style="left:6px;top:36px;width:6px;background:#78a4bc"></i><i style="left:12px;top:36px;width:7px;background:#986f57"></i><i style="left:20px;top:36px;width:6px;background:#78a4bc"></i><i style="left:26px;top:36px;width:24px;background:#986f57"></i><i style="left:51px;top:36px;width:8px;background:#78a4bc"></i><i style="left:59px;top:36px;width:2px;background:#986f57"></i><i style="left:61px;top:36px;width:6px;background:#93668f"></i><i style="left:68px;top:36px;width:17px;background:#a2a286"></i><i style="left:85px;top:36px;width:3px;background:#986f57"></i><i style="left:88px;top:36px;width:1px;background:#5c5c5c"></i><i style="left:4px;top:38px;width:1px;background:#5c5c5c"></i><i style="left:5px;top:38px;width:3px;background:#4273a0"></i><i style="left:8px;top:38px;width:1px;background:#5c5c5c"></i><i style="left:8px;top:40px;width:1px;background:#5c5c5c"></i><i style="left:9px;top:40px;width:2px;background:#4273a0"></i><i style="left:11px;top:40px;width:1px;background:#5c5c5c"></i><i style="left:12px;top:40px;width:3px;background:#a0a0a0"></i><i style="left:15px;top:40px;width:2px;background:#5c5c5c"></i><i style="left:17px;top:40px;width:2px;background:#4273a0"></i><i style="left:19px;top:40px;width:1px;background:#5c5c5c"></i><i style="left:8px;top:44px;width:1px;background:#5c5c5c"></i><i style="left:9px;top:44px;width:6px;background:#4273a0"></i><i style="left:16px;top:44px;width:3px;background:#78a4bc"></i><i style="left:19px;top:44px;width:28px;background:#986f57"></i><i style="left:47px;top:44px;width:3px;background:#5c5c5c"></i><i style="left:50px;top:44px;width:6px;background:#4273a0"></i><i style="left:56px;top:44px;width:1px;background:#5c5c5c"></i><i style="left:8px;top:46px;width:1px;background:#5c5c5c"></i><i style="left:9px;top:46px;width:6px;background:#4273a0"></i><i style="left:16px;top:46px;width:3px;background:#78a4bc"></i><i style="left:19px;top:46px;width:36px;background:#986f57"></i><i style="left:55px;top:46px;width:3px;background:#5c5c5c"></i><i style="left:58px;top:46px;width:6px;background:#4273a0"></i><i style="left:64px;top:46px;width:1px;background:#5c5c5c"></i><i style="left:8px;top:50px;width:106px;background:#527746"></i><i style="left:12px;top:52px;width:1px;background:#5c5c5c"></i><i style="left:13px;top:52px;width:5px;background:#4273a0"></i><i style="left:19px;top:52px;width:4px;background:#78a4bc"></i><i style="left:23px;top:52px;width:7px;background:#986f57"></i><i style="left:31px;top:52px;width:11px;background:#78a4bc"></i><i style="left:42px;top:52px;width:6px;background:#986f57"></i><i style="left:49px;top:52px;width:2px;background:#78a4bc"></i><i style="left:51px;top:52px;width:6px;background:#986f57"></i><i style="left:58px;top:52px;width:4px;background:#78a4bc"></i><i style="left:62px;top:52px;width:6px;background:#986f57"></i><i style="left:69px;top:52px;width:8px;background:#78a4bc"></i><i style="left:77px;top:52px;width:1px;background:#5c5c5c"></i><i style="left:12px;top:54px;width:1px;background:#5c5c5c"></i><i style="left:13px;top:54px;width:2px;background:#4273a0"></i><i style="left:15px;top:54px;width:2px;background:#5c5c5c"></i><i style="left:17px;top:54px;width:2px;background:#4273a0"></i><i style="left:19px;top:54px;width:1px;background:#5c5c5c"></i><i style="left:12px;top:56px;width:1px;background:#5c5c5c"></i><i style="left:13px;top:56px;width:6px;background:#4273a0"></i><i style="left:20px;top:56px;width:4px;background:#78a4bc"></i><i style="left:24px;top:56px;width:9px;background:#986f57"></i><i style="left:33px;top:56px;width:1px;background:#5c5c5c"></i><i style="left:34px;top:56px;width:11px;background:#a0a0a0"></i><i style="left:45px;top:56px;width:2px;background:#5c5c5c"></i><i style="left:47px;top:56px;width:6px;background:#4273a0"></i><i style="left:53px;top:56px;width:1px;background:#5c5c5c"></i><i style="left:8px;top:58px;width:16px;background:#527746"></i><i style="left:4px;top:60px;width:2px;background:#5c5c5c"></i><i style="left:6px;top:60px;width:3px;background:#4273a0"></i><i style="left:9px;top:60px;width:1px;background:#5c5c5c"></i><i style="left:0px;top:62px;width:2px;background:#5c5c5c"></i><i style="left:2px;top:62px;width:4px;background:#4273a0"></i><i style="left:6px;top:62px;width:1px;background:#5c5c5c"></i><i style="left:0px;top:66px;width:2px;background:#5c5c5c"></i><i style="left:2px;top:66px;width:4px;background:#4273a0"></i><i style="left:6px;top:66px;width:1px;background:#5c5c5c"></i><i style="left:0px;top:70px;width:2px;background:#5c5c5c"></i><i style="left:2px;top:70px;width:4px;background:#4273a0"></i><i style="left:6px;top:70px;width:1px;background:#5c5c5c"></i></div>
<div class="abs" style="left:1144px;top:40px;width:2px;height:10px;background:#bdbdbd"></div>
<div class="abs" style="left:1262px;top:0;width:14px;height:460px;background:#1f1f1f;border-left:1px solid #141414"></div>
<div class="abs" style="left:1263px;top:110px;width:13px;height:185px;background:#434343"></div>
<div class="abs" style="left:1267px;top:160px;width:5px;height:38px;background:#989898"></div>
<div class="shadow" style="top:0;left:5px;width:1137px"></div>
<div class="abs" style="left:1009px;top:406px;width:119px;height:30px;background:#0078d4;border-radius:2px"></div>
</div>
<span class="ui" id="lens3" style="left:76.00px;top:495.2px;font-size:12px;color:#999;transform:scaleX(0.9956);">Incoming | Remove Incoming</span>
<span class="ui" id="btn" style="left:1020.50px;top:799.8px;font-size:13px;color:#fff;transform:scaleX(1.0041);">Complete Merge</span>
<div class="abs" style="left:0;top:848px;width:1276px;height:54px;background:#181818;border-top:1px solid #2b2b2b"></div>
<span class="ui" id="p1" style="left:20.30px;top:856.6px;font-size:11px;color:#9d9d9d;transform:scaleX(0.8669);">PROBLEMS</span>
<span class="ui" id="p2" style="left:97.80px;top:856.6px;font-size:11px;color:#9d9d9d;transform:scaleX(0.9020);">OUTPUT</span>
<span class="ui" id="p3" style="left:163.10px;top:856.6px;font-size:11px;color:#9d9d9d;transform:scaleX(0.8878);">DEBUG CONSOLE</span>
<span class="ui" id="p4" style="left:272.30px;top:856.6px;font-size:11px;color:#e7e7e7;transform:scaleX(0.9240);">TERMINAL</span>
<span class="ui" id="p5" style="left:347.60px;top:856.6px;font-size:11px;color:#9d9d9d;transform:scaleX(0.8381);">PORTS</span>
<span class="ui" id="p6" style="left:403.30px;top:856.6px;font-size:11px;color:#9d9d9d;transform:scaleX(0.8773);">GITLENS</span>
<span class="ui" id="p7" style="left:468.70px;top:856.6px;font-size:11px;color:#9d9d9d;transform:scaleX(0.9241);">COMMENTS</span>
<div class="abs" style="left:270px;top:879px;width:56px;height:1px;background:#0078d4"></div>
<div class="cl" id="term" style="left:20.3px;top:889px;color:#d0d0d0;font-size:12.5px;letter-spacing:-0.5px">PS C:\xampp\htdocs\PSS23&gt;</div>
<span class="ui" id="psh" style="left:1040.20px;top:856.3px;font-size:11.5px;color:#ccc;transform:scaleX(0.9294);">powershell</span>
<svg class="ic" style="left:1010px;top:856px" width="266" height="22" viewBox="1010 856 266 22" fill="none" stroke="#ccc" stroke-width="1.1">
<path d="M1021.500 860.500h14l-2 12.500h-14zM1024.500 863.500l3.500 2.500-4 3M1028 870h3.500"/>
<path d="M1109.500 860v13M1103 866.500h13"/>
<path d="M1122.500 865l3.700 3.700 3.700-3.700"/>
<path d="M1143.500 860.500h12v12h-12zM1149.500 860.500v12"/>
<path d="M1169 862.500h11.500M1170.500 862.500l.8 10h7l.8-10M1172.500 862.500v-2h4.500v2M1173.300 865v5.500M1176.200 865v5.500" stroke-width="1"/>
<g fill="#ccc" stroke="none"><rect x="1195" y="866" width="2" height="2"/><rect x="1200" y="866" width="2" height="2"/><rect x="1205" y="866" width="2" height="2"/></g>
<path d="M1222.200 868.500l4.800-4.800 4.800 4.800"/>
<path d="M1248.700 862l9 9M1257.700 862l-9 9"/>
</svg>
</body></html>
